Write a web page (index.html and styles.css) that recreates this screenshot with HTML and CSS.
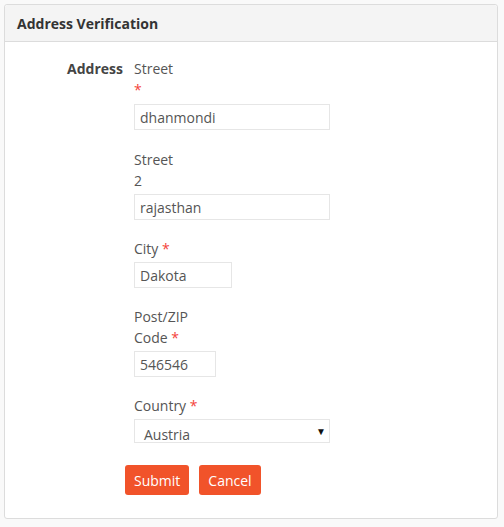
FILE: index.html
```html
<!DOCTYPE html>
<html>
<head>
<meta charset="utf-8">
<link rel="stylesheet" href="styles.css">
</head>
<body>
<div class="panel">
  <div class="panel-head">Address Verification</div>
  <div class="panel-body">
    <div class="row">
      <div class="row-label">Address</div>
      <div class="fields">
        <div class="group first">
          <label class="lbl">Street<br><span class="req">*</span></label>
          <input class="inp w-long" type="text" value="dhanmondi">
        </div>
        <div class="group">
          <label class="lbl">Street<br>2</label>
          <input class="inp w-long" type="text" value="rajasthan">
        </div>
        <div class="group">
          <label class="lbl">City <span class="req">*</span></label>
          <input class="inp w-city" type="text" value="Dakota">
        </div>
        <div class="group">
          <label class="lbl">Post/ZIP<br>Code <span class="req">*</span></label>
          <input class="inp w-zip" type="text" value="546546">
        </div>
        <div class="group">
          <label class="lbl">Country <span class="req">*</span></label>
          <div class="select w-long"><span class="sel-val">Austria</span><span class="caret">&#9660;</span></div>
        </div>
      </div>
    </div>
    <div class="actions">
      <button class="btn">Submit</button>
      <button class="btn">Cancel</button>
    </div>
  </div>
</div>
</body>
</html>
```
FILE: styles.css
```css
html, body {
  margin: 0;
  padding: 0;
  background: #f9f9f9;
}
body {
  font-family: "Open Sans", "Noto Sans", sans-serif;
  font-size: 14px;
  color: #555;
  padding: 4px 6px 6px 4px;
}
.panel {
  background: #fff;
  border: 1px solid #dcdcdc;
  border-radius: 3px;
  height: 515px;
  box-sizing: border-box;
}
.panel-head {
  background: #f4f4f4;
  border-bottom: 1px solid #dcdcdc;
  height: 37px;
  box-sizing: border-box;
  padding: 0 12px;
  display: flex;
  align-items: center;
  font-weight: 700;
  color: #333;
  border-radius: 3px 3px 0 0;
}
.panel-body {
  padding-top: 16px;
}
.row {
  display: flex;
  line-height: 21px;
}
.row-label {
  width: 118px;
  text-align: right;
  font-weight: 700;
  color: #444;
  padding-right: 11px;
}
.fields {
  display: flex;
  flex-direction: column;
}
.group {
  margin-bottom: 18px;
}
.group.first {
  margin-bottom: 19px;
}
.lbl {
  display: block;
  color: #555;
  margin-bottom: 3px;
}
.group.first .lbl {
  margin-bottom: 4px;
}
.req {
  color: #f4433a;
}
.inp {
  display: block;
  height: 26px;
  box-sizing: border-box;
  border: 1px solid #e6e6e6;
  padding: 0 5px;
  font-family: inherit;
  font-size: 14px;
  color: #555;
  margin: 0;
  outline: none;
}
.w-long { width: 196px; }
.w-city { width: 98px; }
.w-zip { width: 82px; }
.select {
  height: 24px;
  box-sizing: border-box;
  border: 1px solid #e6e6e6;
  display: flex;
  align-items: flex-end;
  justify-content: space-between;
  padding: 0 3px 0 9px;
  overflow: hidden;
}
.sel-val {
  line-height: 22px;
  margin-bottom: -4px;
  color: #555;
}
.caret {
  font-size: 10px;
  color: #111;
  align-self: center;
}
.actions {
  display: flex;
  gap: 10px;
  padding-left: 120px;
  margin-top: 4px;
}
.btn {
  background: #f1532a;
  color: #fff;
  border: none;
  border-radius: 3px;
  height: 30px;
  padding: 0 9px;
  font-family: inherit;
  font-size: 14px;
}
```
